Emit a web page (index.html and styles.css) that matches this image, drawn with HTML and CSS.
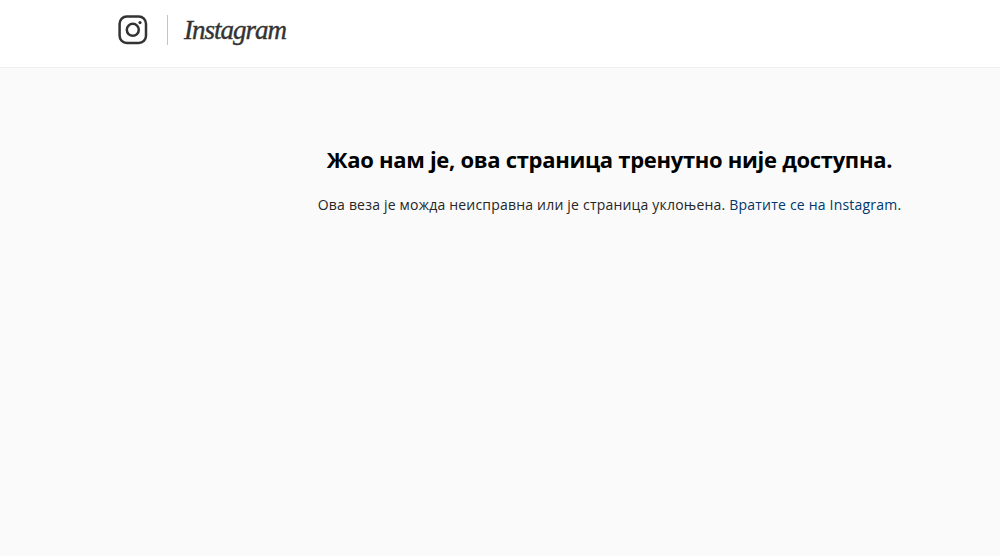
FILE: index.html
```html
<!DOCTYPE html>
<html lang="sr">
<head>
<meta charset="utf-8">
<title>Instagram</title>
<link rel="stylesheet" href="styles.css">
</head>
<body>
<header class="topbar">
  <a class="brand" href="#">
    <svg class="glyph" viewBox="0 0 30 30" width="30" height="30" aria-hidden="true">
      <rect x="1.6" y="1.6" width="26.4" height="26.4" rx="7.2" fill="none" stroke="#333" stroke-width="2.5"/>
      <circle cx="14.8" cy="14.8" r="6" fill="none" stroke="#333" stroke-width="2.5"/>
      <circle cx="22" cy="7.6" r="1.6" fill="#333"/>
    </svg>
    <span class="divider"></span>
    <span class="wordmark">Instagram</span>
  </a>
</header>
<main class="content">
  <h1 class="title">Жао нам је, ова страница тренутно није доступна.</h1>
  <p class="note">Ова веза је можда неисправна или је страница уклоњена. <a class="link" href="#">Вратите се на Instagram</a>.</p>
</main>
</body>
</html>
```
FILE: styles.css
```css
* { box-sizing: border-box; }
html, body { height: 100%; }
body {
  margin: 0;
  display: flex;
  flex-direction: column;
  background: #fafafa;
  color: #262626;
  font-family: "Open Sans", "Noto Sans", sans-serif;
}
.topbar {
  height: 68px;
  flex: none;
  display: flex;
  align-items: center;
  padding: 0 0 7px 118px;
  background: #fff;
  border-bottom: 1px solid #efefef;
}
.brand {
  display: flex;
  align-items: center;
  color: #262626;
  text-decoration: none;
}
.glyph { display: block; }
.divider {
  width: 1px;
  height: 30px;
  margin: 0 16px 0 19px;
  background: #c4c4c4;
}
.wordmark {
  font-family: "Liberation Serif", serif;
  font-style: italic;
  font-size: 27px;
  letter-spacing: -1px;
  line-height: 30px;
  color: #333;
  -webkit-text-stroke: 0.4px #333;
}
.content {
  flex: 1;
  padding: 78px 0 0 219px;
  text-align: center;
}
.title {
  margin: 0;
  font-size: 22px;
  line-height: 26px;
  font-weight: 700;
  letter-spacing: -0.3px;
  color: #000;
}
.note {
  margin: 24px 0 0;
  font-size: 14px;
  line-height: 18px;
  letter-spacing: 0.2px;
  color: #262626;
}
.link {
  color: #00376b;
  text-decoration: none;
}
```
